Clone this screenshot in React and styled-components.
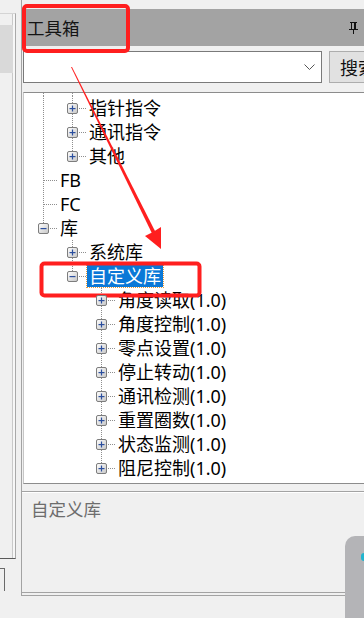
import styled, { createGlobalStyle } from "styled-components";

const GlobalStyle = createGlobalStyle`
  html, body { margin: 0; padding: 0; background: #f0f0f0; }
  body { font-family: "Noto Sans", "Noto Sans CJK SC", sans-serif; }
`;

const Screen = styled.div`
  position: relative;
  width: 364px;
  height: 618px;
  overflow: hidden;
  background: #f0f0f0;
  display: flex;
  align-items: flex-start;
`;

/* left docked strip, mostly cut off */
const Strip = styled.div`
  width: 16px;
  flex: none;
  height: 600px;
  display: flex;
  flex-direction: column;
`;

const StripList = styled.div`
  margin-top: 13px;
  height: 544px;
  border-top: 1px solid #d4d4d4;
  border-right: 1px solid #a9a9a9;
  border-bottom: 1px solid #5a5a5a;
  box-shadow: inset -2px 0 0 #f7f7f7, inset -3px 0 0 #c9c9c9;
`;

const StripSelected = styled.div`
  margin-top: 11px;
  width: 13px;
  height: 48px;
  background: #d9d9d9;
`;

const StripBox = styled.div`
  margin-top: 9px;
  width: 4px;
  height: 22px;
  border-top: 1px solid #6a6a6a;
  border-right: 1px solid #6a6a6a;
`;

const Panel = styled.div`
  margin-left: 5px;
  flex: 1;
  height: 596px;
  overflow: hidden;
  border-left: 1px solid #a3a3a3;
  border-bottom: 1px solid #a3a3a3;
  display: flex;
  flex-direction: column;
  padding-top: 9px;
  box-sizing: border-box;
`;

const Header = styled.div`
  height: 37px;
  flex: none;
  background: #a3a3a3;
  display: flex;
  align-items: center;
  justify-content: space-between;
  padding: 0 6px 0 5px;
`;

const Title = styled.span`
  font-family: "Noto Sans CJK SC", sans-serif;
  font-size: 17.5px;
  color: #141414;
  line-height: 20px;
`;

const SearchRow = styled.div`
  margin-top: 5px;
  height: 32px;
  flex: none;
  display: flex;
  gap: 7px;
  padding-left: 1px;
`;

const Combo = styled.div`
  width: 299px;
  flex: none;
  box-sizing: border-box;
  background: #fff;
  border: 1px solid #7a7a7a;
  display: flex;
  align-items: center;
  justify-content: flex-end;
  padding-right: 6px;
`;

const SearchButton = styled.button`
  width: 60px;
  flex: none;
  background: #e1e1e1;
  border: 1px solid #adadad;
  font-family: "Noto Sans CJK SC", sans-serif;
  font-size: 18px;
  color: #111;
  padding: 0 0 0 10px;
  text-align: left;
  white-space: nowrap;
`;

const Tree = styled.div`
  margin-top: 9px;
  margin-left: 1px;
  height: 390px;
  flex: none;
  background: #fff;
  border-top: 1px solid #8c8c8c;
  border-bottom: 1px solid #8c8c8c;
  border-left: 1px solid #c6c6c6;
  padding-left: 5px;
  overflow: hidden;
`;

const Row = styled.div`
  display: flex;
  height: ${(p) => (p.$stub ? 3 : 24)}px;
`;

const dotsV = `repeating-linear-gradient(to bottom, #8e8e8e 0 1px, transparent 1px 2px)`;
const dotsH = `repeating-linear-gradient(to right, #8e8e8e 0 1px, transparent 1px 2px)`;

const Guide = styled.div`
  width: 29px;
  flex: none;
  background: ${(p) => (p.$line ? dotsV : "none")};
  background-size: 1px 100%;
  background-position: 14px 0;
  background-repeat: no-repeat;
`;

const Node = styled.div`
  width: 29px;
  flex: none;
  position: relative;
  display: flex;
  align-items: center;
  padding-left: 9px;
  box-sizing: border-box;

  &::before {
    content: "";
    position: absolute;
    left: 14px;
    top: 0;
    width: 1px;
    height: ${(p) => (p.$next ? "100%" : "12px")};
    background: ${dotsV};
  }
  &::after {
    content: "";
    position: absolute;
    left: 15px;
    top: 12px;
    width: 14px;
    height: 1px;
    background: ${dotsH};
  }
  svg {
    position: relative;
    z-index: 1;
  }
`;

const Label = styled.span`
  margin-left: 0;
  padding: 0 2px;
  font-size: 18px;
  line-height: 22px;
  height: 22px;
  margin-top: 1px;
  white-space: nowrap;
  color: ${(p) => (p.$selected ? "#fff" : "#000")};
  background: ${(p) => (p.$selected ? "#0a78d7" : "transparent")};
  outline: ${(p) => (p.$selected ? "1px dotted #e89a3c" : "none")};
`;

const Description = styled.div`
  margin-top: 7px;
  flex: 1;
  border-top: 1px solid #a3a3a3;
  box-shadow: inset 0 1px 0 #fff;
  padding: 5px 9px;
  font-family: "Noto Sans CJK SC", sans-serif;
  font-size: 17.5px;
  line-height: 24px;
  color: #6d6d6d;
  margin-bottom: 2px;
  border-bottom: 1px solid #a3a3a3;
`;

const Widget = styled.div`
  position: absolute;
  left: 345px;
  top: 536px;
  width: 30px;
  height: 90px;
  background: #b4b4b7;
  border-radius: 10px 0 0 0;

  &::before {
    content: "";
    position: absolute;
    left: 16px;
    top: 17px;
    width: 6px;
    height: 8px;
    border-radius: 3px;
    background: #22b5cf;
  }
`;

const Overlay = styled.svg`
  position: absolute;
  left: 0;
  top: 0;
  pointer-events: none;
`;

const Expander = ({ open }) => (
  <svg width="11" height="11" viewBox="0 0 11 11">
    <defs>
      <linearGradient id="exg" x1="0" y1="0" x2="1" y2="1">
        <stop offset="0" stopColor="#ffffff" />
        <stop offset="1" stopColor="#c6c6c6" />
      </linearGradient>
    </defs>
    <rect x="0.5" y="0.5" width="10" height="10" rx="1.5" fill="url(#exg)" stroke="#7d7d7d" />
    <rect x="2.5" y="5" width="6" height="1.2" fill="#2c4f9e" />
    {!open && <rect x="4.9" y="2.5" width="1.2" height="6" fill="#2c4f9e" />}
  </svg>
);

const Pin = () => (
  <svg width="9" height="12" viewBox="0 0 9 12">
    <rect x="1" y="0" width="7" height="1" fill="#111" />
    <rect x="2" y="1" width="1" height="6" fill="#111" />
    <rect x="5" y="1" width="2" height="6" fill="#111" />
    <rect x="0" y="7" width="9" height="1" fill="#111" />
    <rect x="4" y="8" width="1" height="4" fill="#111" />
  </svg>
);

const rows = [
  { label: "指针指令", guides: [true], exp: "plus", next: true },
  { label: "通讯指令", guides: [true], exp: "plus", next: true },
  { label: "其他", guides: [true], exp: "plus", next: false },
  { label: "FB", guides: [], next: true },
  { label: "FC", guides: [], next: true },
  { label: "库", guides: [], exp: "minus", next: false },
  { label: "系统库", guides: [false], exp: "plus", next: true },
  { label: "自定义库", guides: [false], exp: "minus", next: false, selected: true },
  { label: "角度读取(1.0)", guides: [false, false], exp: "plus", next: true },
  { label: "角度控制(1.0)", guides: [false, false], exp: "plus", next: true },
  { label: "零点设置(1.0)", guides: [false, false], exp: "plus", next: true },
  { label: "停止转动(1.0)", guides: [false, false], exp: "plus", next: true },
  { label: "通讯检测(1.0)", guides: [false, false], exp: "plus", next: true },
  { label: "重置圈数(1.0)", guides: [false, false], exp: "plus", next: true },
  { label: "状态监测(1.0)", guides: [false, false], exp: "plus", next: true },
  { label: "阻尼控制(1.0)", guides: [false, false], exp: "plus", next: false },
];

export default function App() {
  return (
    <Screen>
      <GlobalStyle />
      <Strip>
        <StripList>
          <StripSelected />
        </StripList>
        <StripBox />
      </Strip>

      <Panel>
        <Header>
          <Title>工具箱</Title>
          <Pin />
        </Header>

        <SearchRow>
          <Combo>
            <svg width="11" height="7" viewBox="0 0 11 7">
              <polyline points="0.5,0.5 5.5,5.5 10.5,0.5" fill="none" stroke="#555" strokeWidth="1" />
            </svg>
          </Combo>
          <SearchButton>搜索</SearchButton>
        </SearchRow>

        <Tree>
          <Row $stub>
            <Guide $line />
            <Guide $line />
          </Row>
          {rows.map((r) => (
            <Row key={r.label}>
              {r.guides.map((g, i) => (
                <Guide key={i} $line={g} />
              ))}
              <Node $next={r.next}>
                {r.exp && <Expander open={r.exp === "minus"} />}
              </Node>
              <Label $selected={r.selected}>{r.label}</Label>
            </Row>
          ))}
        </Tree>

        <Description>自定义库</Description>
      </Panel>

      <Widget />

      <Overlay width="364" height="618" viewBox="0 0 364 618">
        <rect x="24" y="6" width="104" height="45" rx="3" fill="none" stroke="#ff1f1f" strokeWidth="4" />
        <rect x="41.5" y="263.5" width="158" height="32" rx="3" fill="none" stroke="#ff1f1f" strokeWidth="4" />
        <polygon points="71,67 72,67 157,235 153.5,236.5" fill="#ff1f1f" />
        <polygon points="161,249 145,236 153,232 161,227" fill="#ff1f1f" />
      </Overlay>
    </Screen>
  );
}
